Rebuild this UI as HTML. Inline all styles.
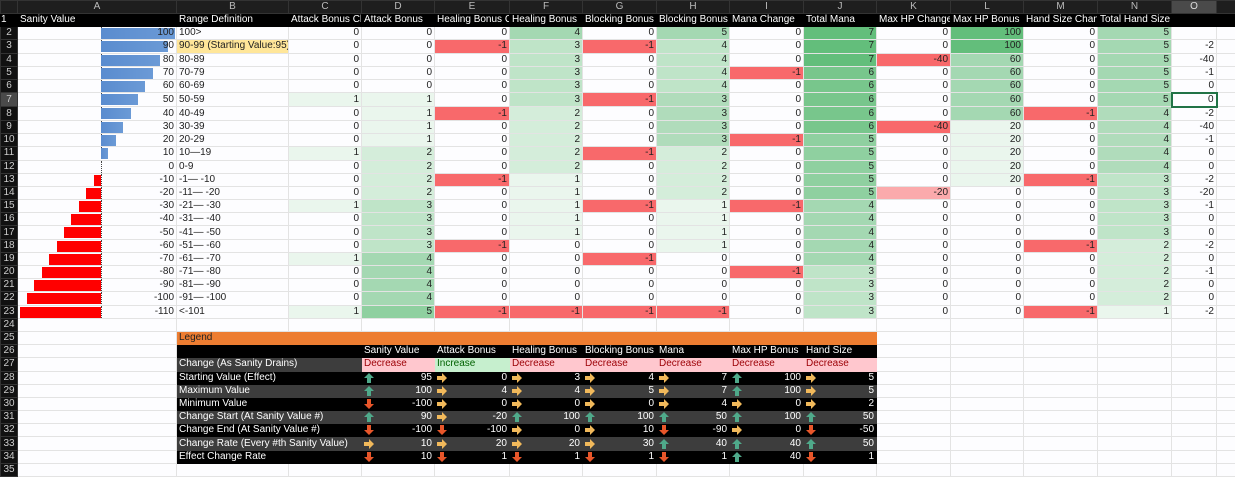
<!DOCTYPE html>
<html><head><meta charset="utf-8"><style>
*{margin:0;padding:0;box-sizing:border-box}
body{width:1235px;height:480px;overflow:hidden;background:#fff;font-family:"Liberation Sans",sans-serif;font-size:10px;color:#222}
table{border-collapse:collapse;table-layout:fixed;width:1235px}
td{height:13.2px;line-height:12px;border:1px solid #e3e3e3;padding:0 2px;white-space:nowrap;overflow:hidden;text-align:right;background:#fdfdff}
tr.hd td{height:13px;background:#1e1e1e;color:#bbb;text-align:center;border:1px solid #333}
td.n{background:#111;color:#ccc;text-align:center;border:1px solid #333;padding:0}
tr.r1 td{background:#000;color:#fff;text-align:left;border-color:#000}
td.l{text-align:left}
.a{background:#eaf6ed!important}.b{background:#d4edda!important}.c{background:#bfe4c8!important}.h{background:#b0dcbb!important}
.d{background:#a4d8b2!important}.e{background:#8fd0a0!important}.f{background:#78c68c!important}.g{background:#63be7b!important}
.r{background:#f8696b!important}.rl{background:#fbaaac!important}
td.A{position:relative;padding:0 2px}
.bp{position:absolute;left:83px;top:1px;height:11px;background:linear-gradient(90deg,#5a8ccf,#6b9ad6)}
.bn{position:absolute;right:75px;top:1px;height:11px;background:#f00}
.ax{position:absolute;left:83px;top:0;height:14px;border-left:1px dotted #444}
.vt{position:relative}
tr.lg td.x{background:#ed7d31;color:#222;text-align:left;border-color:#ed7d31}
td.k{background:#000!important;color:#fff;border-color:#000}
td.m{background:#3d3d3d!important;color:#fff;border-color:#3d3d3d}
td.lt{text-align:left}
.pk{background:#ffc7ce!important;color:#9c0006;text-align:left;border-color:#ffc7ce}
.gr{background:#c6efce!important;color:#006100;text-align:left;border-color:#c6efce}
td svg{float:left;margin-top:1px}
</style></head><body>
<table>
<colgroup><col style="width:17px"><col style="width:159px"><col style="width:112px"><col style="width:73px"><col style="width:73px"><col style="width:75px"><col style="width:73px"><col style="width:74px"><col style="width:73px"><col style="width:74px"><col style="width:73px"><col style="width:74px"><col style="width:73px"><col style="width:74px"><col style="width:74px"><col style="width:45px"><col style="width:19px"></colgroup>
<tr class="hd"><td></td><td>A</td><td>B</td><td>C</td><td>D</td><td>E</td><td>F</td><td>G</td><td>H</td><td>I</td><td>J</td><td>K</td><td>L</td><td>M</td><td>N</td><td style="background:#4a4a4a;color:#ddd">O</td><td></td></tr>
<tr class="r1"><td class="n">1</td><td>Sanity Value</td><td>Range Definition</td><td>Attack Bonus Change</td><td>Attack Bonus</td><td>Healing Bonus Change</td><td>Healing Bonus</td><td>Blocking Bonus Change</td><td>Blocking Bonus</td><td>Mana Change</td><td>Total Mana</td><td>Max HP Change</td><td>Max HP Bonus</td><td>Hand Size Change</td><td>Total Hand Size</td><td></td><td></td></tr>
<tr><td class="n">2</td><td class="A"><div class="ax"></div><div class="bp" style="width:74px"></div><span class="vt">100</span></td><td class="l">100&gt;</td><td>0</td><td>0</td><td>0</td><td class="d">4</td><td>0</td><td class="d">5</td><td>0</td><td class="g">7</td><td>0</td><td class="g">100</td><td>0</td><td class="d">5</td><td></td><td></td></tr>
<tr><td class="n">3</td><td class="A"><div class="ax"></div><div class="bp" style="width:67px"></div><span class="vt">90</span></td><td class="l" style="background:#ffe699">90-99 (Starting Value:95)</td><td>0</td><td>0</td><td class="r">-1</td><td class="c">3</td><td class="r">-1</td><td class="c">4</td><td>0</td><td class="g">7</td><td>0</td><td class="g">100</td><td>0</td><td class="d">5</td><td>-2</td><td></td></tr>
<tr><td class="n">4</td><td class="A"><div class="ax"></div><div class="bp" style="width:59px"></div><span class="vt">80</span></td><td class="l">80-89</td><td>0</td><td>0</td><td>0</td><td class="c">3</td><td>0</td><td class="c">4</td><td>0</td><td class="g">7</td><td class="r">-40</td><td class="d">60</td><td>0</td><td class="d">5</td><td>-40</td><td></td></tr>
<tr><td class="n">5</td><td class="A"><div class="ax"></div><div class="bp" style="width:52px"></div><span class="vt">70</span></td><td class="l">70-79</td><td>0</td><td>0</td><td>0</td><td class="c">3</td><td>0</td><td class="c">4</td><td class="r">-1</td><td class="f">6</td><td>0</td><td class="d">60</td><td>0</td><td class="d">5</td><td>-1</td><td></td></tr>
<tr><td class="n">6</td><td class="A"><div class="ax"></div><div class="bp" style="width:44px"></div><span class="vt">60</span></td><td class="l">60-69</td><td>0</td><td>0</td><td>0</td><td class="c">3</td><td>0</td><td class="c">4</td><td>0</td><td class="f">6</td><td>0</td><td class="d">60</td><td>0</td><td class="d">5</td><td>0</td><td></td></tr>
<tr><td class="n" style="background:#4a4a4a">7</td><td class="A"><div class="ax"></div><div class="bp" style="width:37px"></div><span class="vt">50</span></td><td class="l">50-59</td><td class="a">1</td><td class="a">1</td><td>0</td><td class="c">3</td><td class="r">-1</td><td class="h">3</td><td>0</td><td class="f">6</td><td>0</td><td class="d">60</td><td>0</td><td class="d">5</td><td style="border:2px solid #217346">0</td><td></td></tr>
<tr><td class="n">8</td><td class="A"><div class="ax"></div><div class="bp" style="width:30px"></div><span class="vt">40</span></td><td class="l">40-49</td><td>0</td><td class="a">1</td><td class="r">-1</td><td class="b">2</td><td>0</td><td class="h">3</td><td>0</td><td class="f">6</td><td>0</td><td class="d">60</td><td class="r">-1</td><td class="h">4</td><td>-2</td><td></td></tr>
<tr><td class="n">9</td><td class="A"><div class="ax"></div><div class="bp" style="width:22px"></div><span class="vt">30</span></td><td class="l">30-39</td><td>0</td><td class="a">1</td><td>0</td><td class="b">2</td><td>0</td><td class="h">3</td><td>0</td><td class="f">6</td><td class="r">-40</td><td class="a">20</td><td>0</td><td class="h">4</td><td>-40</td><td></td></tr>
<tr><td class="n">10</td><td class="A"><div class="ax"></div><div class="bp" style="width:15px"></div><span class="vt">20</span></td><td class="l">20-29</td><td>0</td><td class="a">1</td><td>0</td><td class="b">2</td><td>0</td><td class="h">3</td><td class="r">-1</td><td class="e">5</td><td>0</td><td class="a">20</td><td>0</td><td class="h">4</td><td>-1</td><td></td></tr>
<tr><td class="n">11</td><td class="A"><div class="ax"></div><div class="bp" style="width:7px"></div><span class="vt">10</span></td><td class="l">10—19</td><td class="a">1</td><td class="b">2</td><td>0</td><td class="b">2</td><td class="r">-1</td><td class="b">2</td><td>0</td><td class="e">5</td><td>0</td><td class="a">20</td><td>0</td><td class="h">4</td><td>0</td><td></td></tr>
<tr><td class="n">12</td><td class="A"><div class="ax"></div><span class="vt">0</span></td><td class="l">0-9</td><td>0</td><td class="b">2</td><td>0</td><td class="b">2</td><td>0</td><td class="b">2</td><td>0</td><td class="e">5</td><td>0</td><td class="a">20</td><td>0</td><td class="h">4</td><td>0</td><td></td></tr>
<tr><td class="n">13</td><td class="A"><div class="ax"></div><div class="bn" style="width:7px"></div><span class="vt">-10</span></td><td class="l">-1— -10</td><td>0</td><td class="b">2</td><td class="r">-1</td><td class="a">1</td><td>0</td><td class="b">2</td><td>0</td><td class="e">5</td><td>0</td><td class="a">20</td><td class="r">-1</td><td class="c">3</td><td>-2</td><td></td></tr>
<tr><td class="n">14</td><td class="A"><div class="ax"></div><div class="bn" style="width:15px"></div><span class="vt">-20</span></td><td class="l">-11— -20</td><td>0</td><td class="b">2</td><td>0</td><td class="a">1</td><td>0</td><td class="b">2</td><td>0</td><td class="e">5</td><td class="rl">-20</td><td>0</td><td>0</td><td class="c">3</td><td>-20</td><td></td></tr>
<tr><td class="n">15</td><td class="A"><div class="ax"></div><div class="bn" style="width:22px"></div><span class="vt">-30</span></td><td class="l">-21— -30</td><td class="a">1</td><td class="c">3</td><td>0</td><td class="a">1</td><td class="r">-1</td><td class="a">1</td><td class="r">-1</td><td class="d">4</td><td>0</td><td>0</td><td>0</td><td class="c">3</td><td>-1</td><td></td></tr>
<tr><td class="n">16</td><td class="A"><div class="ax"></div><div class="bn" style="width:30px"></div><span class="vt">-40</span></td><td class="l">-31— -40</td><td>0</td><td class="c">3</td><td>0</td><td class="a">1</td><td>0</td><td class="a">1</td><td>0</td><td class="d">4</td><td>0</td><td>0</td><td>0</td><td class="c">3</td><td>0</td><td></td></tr>
<tr><td class="n">17</td><td class="A"><div class="ax"></div><div class="bn" style="width:37px"></div><span class="vt">-50</span></td><td class="l">-41— -50</td><td>0</td><td class="c">3</td><td>0</td><td class="a">1</td><td>0</td><td class="a">1</td><td>0</td><td class="d">4</td><td>0</td><td>0</td><td>0</td><td class="c">3</td><td>0</td><td></td></tr>
<tr><td class="n">18</td><td class="A"><div class="ax"></div><div class="bn" style="width:44px"></div><span class="vt">-60</span></td><td class="l">-51— -60</td><td>0</td><td class="c">3</td><td class="r">-1</td><td>0</td><td>0</td><td class="a">1</td><td>0</td><td class="d">4</td><td>0</td><td>0</td><td class="r">-1</td><td class="b">2</td><td>-2</td><td></td></tr>
<tr><td class="n">19</td><td class="A"><div class="ax"></div><div class="bn" style="width:52px"></div><span class="vt">-70</span></td><td class="l">-61— -70</td><td class="a">1</td><td class="d">4</td><td>0</td><td>0</td><td class="r">-1</td><td>0</td><td>0</td><td class="d">4</td><td>0</td><td>0</td><td>0</td><td class="b">2</td><td>0</td><td></td></tr>
<tr><td class="n">20</td><td class="A"><div class="ax"></div><div class="bn" style="width:59px"></div><span class="vt">-80</span></td><td class="l">-71— -80</td><td>0</td><td class="d">4</td><td>0</td><td>0</td><td>0</td><td>0</td><td class="r">-1</td><td class="c">3</td><td>0</td><td>0</td><td>0</td><td class="b">2</td><td>-1</td><td></td></tr>
<tr><td class="n">21</td><td class="A"><div class="ax"></div><div class="bn" style="width:67px"></div><span class="vt">-90</span></td><td class="l">-81— -90</td><td>0</td><td class="d">4</td><td>0</td><td>0</td><td>0</td><td>0</td><td>0</td><td class="c">3</td><td>0</td><td>0</td><td>0</td><td class="b">2</td><td>0</td><td></td></tr>
<tr><td class="n">22</td><td class="A"><div class="ax"></div><div class="bn" style="width:74px"></div><span class="vt">-100</span></td><td class="l">-91— -100</td><td>0</td><td class="d">4</td><td>0</td><td>0</td><td>0</td><td>0</td><td>0</td><td class="c">3</td><td>0</td><td>0</td><td>0</td><td class="b">2</td><td>0</td><td></td></tr>
<tr><td class="n">23</td><td class="A"><div class="ax"></div><div class="bn" style="width:81px"></div><span class="vt">-110</span></td><td class="l">&lt;-101</td><td class="a">1</td><td class="e">5</td><td class="r">-1</td><td class="r">-1</td><td class="r">-1</td><td class="r">-1</td><td>0</td><td class="c">3</td><td>0</td><td>0</td><td class="r">-1</td><td class="a">1</td><td>-2</td><td></td></tr>
<tr><td class="n">24</td><td></td><td></td><td></td><td></td><td></td><td></td><td></td><td></td><td></td><td></td><td></td><td></td><td></td><td></td><td></td><td></td></tr>
<tr class="lg"><td class="n">25</td><td></td><td class="x" colspan="9">Legend</td><td></td><td></td><td></td><td></td><td></td><td></td></tr>
<tr><td class="n">26</td><td></td><td class="k" colspan="2"></td><td class="k lt">Sanity Value</td><td class="k lt">Attack Bonus</td><td class="k lt">Healing Bonus</td><td class="k lt">Blocking Bonus</td><td class="k lt">Mana</td><td class="k lt">Max HP Bonus</td><td class="k lt">Hand Size</td><td></td><td></td><td></td><td></td><td></td><td></td></tr>
<tr><td class="n">27</td><td></td><td class="m lt" colspan="2">Change (As Sanity Drains)</td><td class="pk">Decrease</td><td class="gr">Increase</td><td class="pk">Decrease</td><td class="pk">Decrease</td><td class="pk">Decrease</td><td class="pk">Decrease</td><td class="pk">Decrease</td><td></td><td></td><td></td><td></td><td></td><td></td></tr>
<tr><td class="n">28</td><td></td><td class="k lt" colspan="2">Starting Value (Effect)</td>
<td class="k"><svg width="10" height="10" viewBox="0 0 10 10"><path d="M5 0L10 5H7V10H3V5H0Z" fill="#4fa98a"/></svg>95</td>
<td class="k"><svg width="10" height="10" viewBox="0 0 10 10"><path d="M0 3H5V0L10 5L5 10V7H0Z" fill="#f1b95b"/></svg>0</td>
<td class="k"><svg width="10" height="10" viewBox="0 0 10 10"><path d="M0 3H5V0L10 5L5 10V7H0Z" fill="#f1b95b"/></svg>3</td>
<td class="k"><svg width="10" height="10" viewBox="0 0 10 10"><path d="M0 3H5V0L10 5L5 10V7H0Z" fill="#f1b95b"/></svg>4</td>
<td class="k"><svg width="10" height="10" viewBox="0 0 10 10"><path d="M0 3H5V0L10 5L5 10V7H0Z" fill="#f1b95b"/></svg>7</td>
<td class="k"><svg width="10" height="10" viewBox="0 0 10 10"><path d="M5 0L10 5H7V10H3V5H0Z" fill="#4fa98a"/></svg>100</td>
<td class="k"><svg width="10" height="10" viewBox="0 0 10 10"><path d="M0 3H5V0L10 5L5 10V7H0Z" fill="#f1b95b"/></svg>5</td>
<td></td><td></td><td></td><td></td><td></td><td></td></tr>
<tr><td class="n">29</td><td></td><td class="m lt" colspan="2">Maximum Value</td>
<td class="m"><svg width="10" height="10" viewBox="0 0 10 10"><path d="M5 0L10 5H7V10H3V5H0Z" fill="#4fa98a"/></svg>100</td>
<td class="m"><svg width="10" height="10" viewBox="0 0 10 10"><path d="M0 3H5V0L10 5L5 10V7H0Z" fill="#f1b95b"/></svg>4</td>
<td class="m"><svg width="10" height="10" viewBox="0 0 10 10"><path d="M0 3H5V0L10 5L5 10V7H0Z" fill="#f1b95b"/></svg>4</td>
<td class="m"><svg width="10" height="10" viewBox="0 0 10 10"><path d="M0 3H5V0L10 5L5 10V7H0Z" fill="#f1b95b"/></svg>5</td>
<td class="m"><svg width="10" height="10" viewBox="0 0 10 10"><path d="M0 3H5V0L10 5L5 10V7H0Z" fill="#f1b95b"/></svg>7</td>
<td class="m"><svg width="10" height="10" viewBox="0 0 10 10"><path d="M5 0L10 5H7V10H3V5H0Z" fill="#4fa98a"/></svg>100</td>
<td class="m"><svg width="10" height="10" viewBox="0 0 10 10"><path d="M0 3H5V0L10 5L5 10V7H0Z" fill="#f1b95b"/></svg>5</td>
<td></td><td></td><td></td><td></td><td></td><td></td></tr>
<tr><td class="n">30</td><td></td><td class="k lt" colspan="2">Minimum Value</td>
<td class="k"><svg width="10" height="10" viewBox="0 0 10 10"><path d="M3 0H7V5H10L5 10L0 5H3Z" fill="#e8562a"/></svg>-100</td>
<td class="k"><svg width="10" height="10" viewBox="0 0 10 10"><path d="M0 3H5V0L10 5L5 10V7H0Z" fill="#f1b95b"/></svg>0</td>
<td class="k"><svg width="10" height="10" viewBox="0 0 10 10"><path d="M0 3H5V0L10 5L5 10V7H0Z" fill="#f1b95b"/></svg>0</td>
<td class="k"><svg width="10" height="10" viewBox="0 0 10 10"><path d="M0 3H5V0L10 5L5 10V7H0Z" fill="#f1b95b"/></svg>0</td>
<td class="k"><svg width="10" height="10" viewBox="0 0 10 10"><path d="M0 3H5V0L10 5L5 10V7H0Z" fill="#f1b95b"/></svg>4</td>
<td class="k"><svg width="10" height="10" viewBox="0 0 10 10"><path d="M0 3H5V0L10 5L5 10V7H0Z" fill="#f1b95b"/></svg>0</td>
<td class="k"><svg width="10" height="10" viewBox="0 0 10 10"><path d="M0 3H5V0L10 5L5 10V7H0Z" fill="#f1b95b"/></svg>2</td>
<td></td><td></td><td></td><td></td><td></td><td></td></tr>
<tr><td class="n">31</td><td></td><td class="m lt" colspan="2">Change Start (At Sanity Value #)</td>
<td class="m"><svg width="10" height="10" viewBox="0 0 10 10"><path d="M5 0L10 5H7V10H3V5H0Z" fill="#4fa98a"/></svg>90</td>
<td class="m"><svg width="10" height="10" viewBox="0 0 10 10"><path d="M0 3H5V0L10 5L5 10V7H0Z" fill="#f1b95b"/></svg>-20</td>
<td class="m"><svg width="10" height="10" viewBox="0 0 10 10"><path d="M5 0L10 5H7V10H3V5H0Z" fill="#4fa98a"/></svg>100</td>
<td class="m"><svg width="10" height="10" viewBox="0 0 10 10"><path d="M5 0L10 5H7V10H3V5H0Z" fill="#4fa98a"/></svg>100</td>
<td class="m"><svg width="10" height="10" viewBox="0 0 10 10"><path d="M5 0L10 5H7V10H3V5H0Z" fill="#4fa98a"/></svg>50</td>
<td class="m"><svg width="10" height="10" viewBox="0 0 10 10"><path d="M5 0L10 5H7V10H3V5H0Z" fill="#4fa98a"/></svg>100</td>
<td class="m"><svg width="10" height="10" viewBox="0 0 10 10"><path d="M5 0L10 5H7V10H3V5H0Z" fill="#4fa98a"/></svg>50</td>
<td></td><td></td><td></td><td></td><td></td><td></td></tr>
<tr><td class="n">32</td><td></td><td class="k lt" colspan="2">Change End (At Sanity Value #)</td>
<td class="k"><svg width="10" height="10" viewBox="0 0 10 10"><path d="M3 0H7V5H10L5 10L0 5H3Z" fill="#e8562a"/></svg>-100</td>
<td class="k"><svg width="10" height="10" viewBox="0 0 10 10"><path d="M3 0H7V5H10L5 10L0 5H3Z" fill="#e8562a"/></svg>-100</td>
<td class="k"><svg width="10" height="10" viewBox="0 0 10 10"><path d="M0 3H5V0L10 5L5 10V7H0Z" fill="#f1b95b"/></svg>0</td>
<td class="k"><svg width="10" height="10" viewBox="0 0 10 10"><path d="M0 3H5V0L10 5L5 10V7H0Z" fill="#f1b95b"/></svg>10</td>
<td class="k"><svg width="10" height="10" viewBox="0 0 10 10"><path d="M3 0H7V5H10L5 10L0 5H3Z" fill="#e8562a"/></svg>-90</td>
<td class="k"><svg width="10" height="10" viewBox="0 0 10 10"><path d="M0 3H5V0L10 5L5 10V7H0Z" fill="#f1b95b"/></svg>0</td>
<td class="k"><svg width="10" height="10" viewBox="0 0 10 10"><path d="M3 0H7V5H10L5 10L0 5H3Z" fill="#e8562a"/></svg>-50</td>
<td></td><td></td><td></td><td></td><td></td><td></td></tr>
<tr><td class="n">33</td><td></td><td class="m lt" colspan="2">Change Rate (Every #th Sanity Value)</td>
<td class="m"><svg width="10" height="10" viewBox="0 0 10 10"><path d="M0 3H5V0L10 5L5 10V7H0Z" fill="#f1b95b"/></svg>10</td>
<td class="m"><svg width="10" height="10" viewBox="0 0 10 10"><path d="M0 3H5V0L10 5L5 10V7H0Z" fill="#f1b95b"/></svg>20</td>
<td class="m"><svg width="10" height="10" viewBox="0 0 10 10"><path d="M0 3H5V0L10 5L5 10V7H0Z" fill="#f1b95b"/></svg>20</td>
<td class="m"><svg width="10" height="10" viewBox="0 0 10 10"><path d="M0 3H5V0L10 5L5 10V7H0Z" fill="#f1b95b"/></svg>30</td>
<td class="m"><svg width="10" height="10" viewBox="0 0 10 10"><path d="M5 0L10 5H7V10H3V5H0Z" fill="#4fa98a"/></svg>40</td>
<td class="m"><svg width="10" height="10" viewBox="0 0 10 10"><path d="M5 0L10 5H7V10H3V5H0Z" fill="#4fa98a"/></svg>40</td>
<td class="m"><svg width="10" height="10" viewBox="0 0 10 10"><path d="M5 0L10 5H7V10H3V5H0Z" fill="#4fa98a"/></svg>50</td>
<td></td><td></td><td></td><td></td><td></td><td></td></tr>
<tr><td class="n">34</td><td></td><td class="k lt" colspan="2">Effect Change Rate</td>
<td class="k"><svg width="10" height="10" viewBox="0 0 10 10"><path d="M3 0H7V5H10L5 10L0 5H3Z" fill="#e8562a"/></svg>10</td>
<td class="k"><svg width="10" height="10" viewBox="0 0 10 10"><path d="M3 0H7V5H10L5 10L0 5H3Z" fill="#e8562a"/></svg>1</td>
<td class="k"><svg width="10" height="10" viewBox="0 0 10 10"><path d="M3 0H7V5H10L5 10L0 5H3Z" fill="#e8562a"/></svg>1</td>
<td class="k"><svg width="10" height="10" viewBox="0 0 10 10"><path d="M3 0H7V5H10L5 10L0 5H3Z" fill="#e8562a"/></svg>1</td>
<td class="k"><svg width="10" height="10" viewBox="0 0 10 10"><path d="M3 0H7V5H10L5 10L0 5H3Z" fill="#e8562a"/></svg>1</td>
<td class="k"><svg width="10" height="10" viewBox="0 0 10 10"><path d="M5 0L10 5H7V10H3V5H0Z" fill="#4fa98a"/></svg>40</td>
<td class="k"><svg width="10" height="10" viewBox="0 0 10 10"><path d="M3 0H7V5H10L5 10L0 5H3Z" fill="#e8562a"/></svg>1</td>
<td></td><td></td><td></td><td></td><td></td><td></td></tr>
<tr><td class="n">35</td><td></td><td></td><td></td><td></td><td></td><td></td><td></td><td></td><td></td><td></td><td></td><td></td><td></td><td></td><td></td><td></td></tr>
</table>
</body></html>
